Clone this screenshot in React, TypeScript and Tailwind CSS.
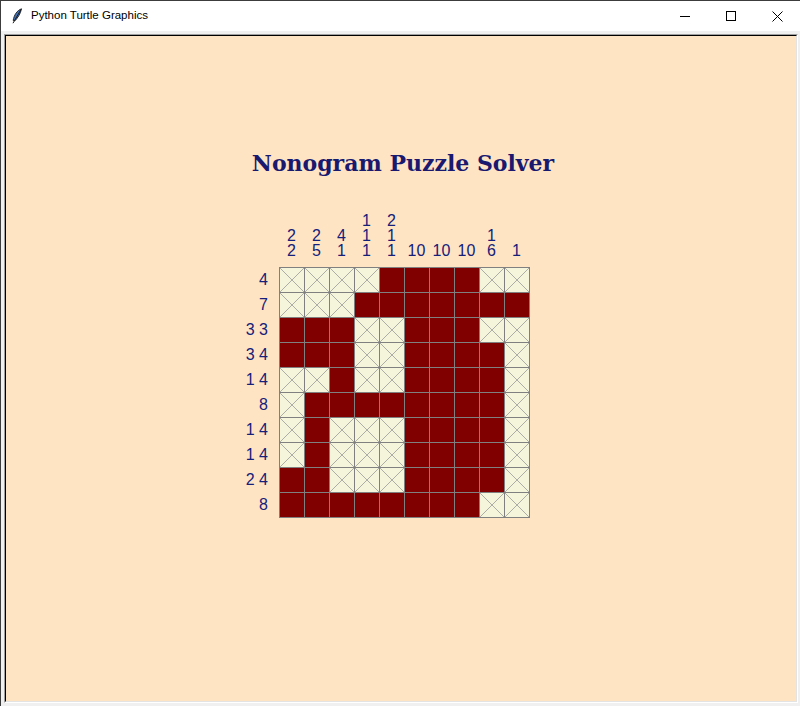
import React from 'react';

const rows = [
  '0000111100',
  '0001111111',
  '1110011100',
  '1110011110',
  '0010011110',
  '0111111110',
  '0100011110',
  '0100011110',
  '1100011110',
  '1111111100',
];

const rowClues = ['4', '7', '3 3', '3 4', '1 4', '8', '1 4', '1 4', '2 4', '8'];

const colClues = [
  ['2', '2'],
  ['2', '5'],
  ['4', '1'],
  ['1', '1', '1'],
  ['2', '1', '1'],
  ['10'],
  ['10'],
  ['10'],
  ['1', '6'],
  ['1'],
];

function Feather() {
  return (
    <svg width="12" height="16" viewBox="0 0 12 16">
      <path d="M10.5 0.8 C6 2.5 3 7 2.2 12.5 L4 12.8 C6.5 10 9.5 6 10.5 0.8 Z" fill="#3f6fb5" stroke="#1b1b1b" strokeWidth="0.9" />
      <path d="M10 1.5 L2 15.2" stroke="#1b1b1b" strokeWidth="1" />
    </svg>
  );
}

function EmptyCell() {
  return (
    <div className="w-[24px] h-[24px] bg-[#f5f5dc]">
      <svg width="24" height="24" viewBox="0 0 24 24" className="block">
        <line x1="0" y1="0" x2="24" y2="24" stroke="#9a9a9a" strokeWidth="0.8" />
        <line x1="24" y1="0" x2="0" y2="24" stroke="#9a9a9a" strokeWidth="0.8" />
      </svg>
    </div>
  );
}

export default function App() {
  return (
    <div className="w-[800px] h-[706px] bg-[#f0f0f0] border-t border-l border-[#3c3c3c] flex flex-col overflow-hidden" style={{ fontFamily: '"Liberation Sans", Arial, sans-serif' }}>
      {/* Title bar */}
      <div className="h-[30px] bg-white flex items-center shrink-0">
        <div className="w-[30px] flex justify-center pl-[2px]">
          <Feather />
        </div>
        <span className="text-[11.5px] text-black leading-none">
          Python Turtle Graphics
        </span>
        <div className="ml-auto flex h-full">
          <div className="w-[46px] h-full flex items-center justify-center">
            <div className="w-[10px] h-px bg-black" />
          </div>
          <div className="w-[46px] h-full flex items-center justify-center">
            <div className="w-[10px] h-[10px] border border-black" />
          </div>
          <div className="w-[46px] h-full flex items-center justify-center">
            <svg width="11" height="11" viewBox="0 0 11 11">
              <path d="M0.5 0.5 L10.5 10.5 M10.5 0.5 L0.5 10.5" stroke="#000" strokeWidth="1" />
            </svg>
          </div>
        </div>
      </div>

      {/* Canvas frame */}
      <div className="flex-1 pt-[3px] pl-[3px] pr-[2px] pb-[3px] flex">
        <div className="flex-1 flex border-t border-l border-[#a0a0a0] border-r border-b border-r-white border-b-white">
          <div className="flex-1 bg-[#ffe4c4] border-t border-l border-black border-r border-b border-r-[#e3e3e3] border-b-[#e3e3e3] flex flex-col">
            <div className="mt-[116px] ml-[197px] w-[400px] text-center text-[22px] leading-[22px] font-bold text-[#191970]" style={{ fontFamily: '"DejaVu Serif", Georgia, serif' }}>
              Nonogram Puzzle Solver
            </div>

            <div className="flex mt-[39px] ml-[222px] text-[16px] text-[#14207a]">
              <div className="w-[40px] mr-[11px] pt-[54px] flex flex-col">
                {rowClues.map((c, i) => (
                  <div key={i} className="h-[25px] flex items-center justify-end leading-none whitespace-pre">
                    {c}
                  </div>
                ))}
              </div>

              <div className="flex flex-col">
                <div className="flex h-[45px] mb-[9px]">
                  {colClues.map((col, i) => (
                    <div key={i} className="w-[25px] flex flex-col justify-end items-center leading-[15px]">
                      {col.map((n, j) => (
                        <div key={j} className="h-[15px]">{n}</div>
                      ))}
                    </div>
                  ))}
                </div>

                <div className="grid grid-cols-10 gap-px p-px bg-[#808080] w-[251px]">
                  {rows.map((r, i) =>
                    r.split('').map((v, j) =>
                      v === '1' ? (
                        <div key={`${i}-${j}`} className="w-[24px] h-[24px] bg-[#800000]" />
                      ) : (
                        <EmptyCell key={`${i}-${j}`} />
                      )
                    )
                  )}
                </div>
              </div>
            </div>
          </div>
        </div>
      </div>
    </div>
  );
}
